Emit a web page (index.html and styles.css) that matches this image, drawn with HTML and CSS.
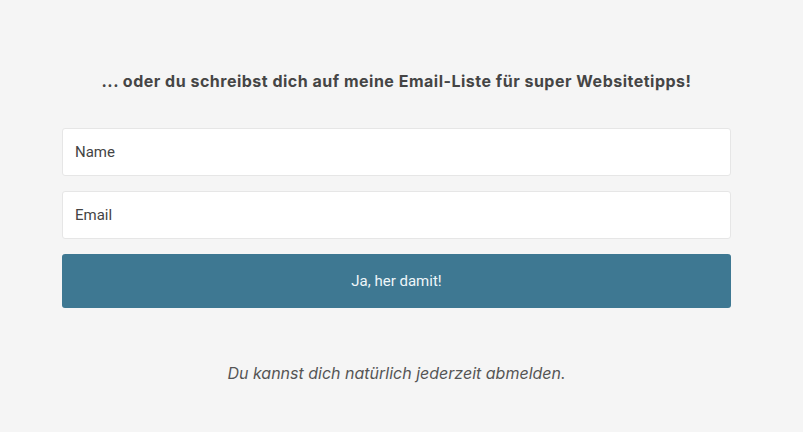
FILE: index.html
```html
<!DOCTYPE html>
<html lang="de">
<head>
<meta charset="utf-8">
<link rel="stylesheet" href="styles.css">
</head>
<body>
<main class="signup">
  <h2 class="title">... oder du schreibst dich auf meine Email-Liste für super Websitetipps!</h2>
  <form class="form">
    <input class="field" type="text" placeholder="Name">
    <input class="field" type="email" placeholder="Email">
    <button class="submit" type="button">Ja, her damit!</button>
  </form>
  <p class="note">Du kannst dich natürlich jederzeit abmelden.</p>
</main>
</body>
</html>
```
FILE: styles.css
```css
html, body {
  margin: 0;
  padding: 0;
  background: #f5f5f5;
}
.signup {
  width: 669px;
  margin: 0 0 0 62px;
  padding-top: 70px;
  display: flex;
  flex-direction: column;
  align-items: stretch;
}
.title {
  margin: 0;
  font-family: Inter, "Liberation Sans", sans-serif;
  font-weight: 700;
  font-size: 16px;
  line-height: 22px;
  letter-spacing: 0.5px;
  color: #454545;
  text-align: center;
}
.form {
  margin-top: 36px;
  display: flex;
  flex-direction: column;
  gap: 15px;
}
.field {
  box-sizing: border-box;
  height: 48px;
  border: 1px solid #e6e6e6;
  border-radius: 3px;
  background: #fff;
  padding: 0 12px;
  font-family: Roboto, "Liberation Sans", sans-serif;
  font-size: 15px;
  color: #444;
  outline: none;
}
.field::placeholder {
  color: #444;
  opacity: 1;
}
.submit {
  height: 54px;
  border: none;
  border-radius: 3px;
  background: #3e7892;
  color: #eef6f9;
  font-family: Roboto, "Liberation Sans", sans-serif;
  font-size: 15px;
  cursor: pointer;
}
.note {
  margin: 55px 0 0;
  text-align: center;
  font-family: Inter, "Liberation Sans", sans-serif;
  font-style: italic;
  font-size: 16px;
  color: #555;
}
```
